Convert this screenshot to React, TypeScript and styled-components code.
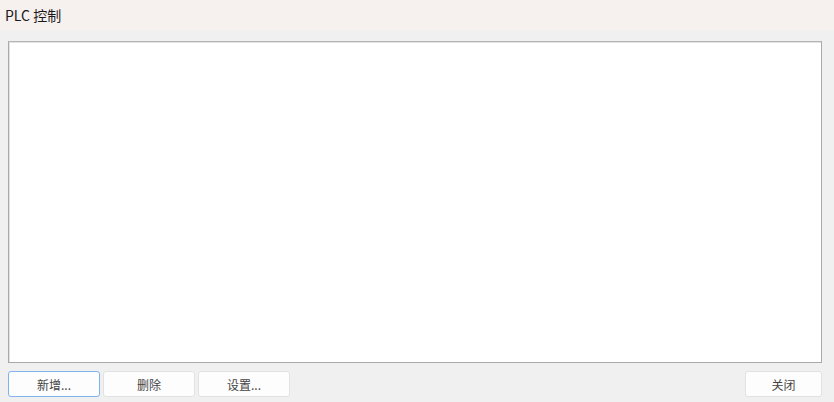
import React from "react";
import styled, { createGlobalStyle } from "styled-components";

const Global = createGlobalStyle`
  html, body { margin: 0; padding: 0; }
  body {
    width: 834px;
    height: 402px;
    overflow: hidden;
    background: #f0f0f0;
    font-family: "Noto Sans CJK SC", "Noto Sans", sans-serif;
  }
`;

const Window = styled.div`
  width: 834px;
  height: 402px;
  display: flex;
  flex-direction: column;
  background: #f0f0f0;
`;

const TitleBar = styled.div`
  height: 31px;
  flex: none;
  display: flex;
  align-items: center;
  padding-left: 5px;
  background: #f6f0ee;
  font-size: 14px;
  color: #1a1a1a;
  box-sizing: border-box;
  padding-bottom: 2px;
`;

const Body = styled.div`
  flex: 1;
  display: flex;
  flex-direction: column;
  padding: 10px 12px 5px 8px;
  gap: 8px;
`;

const ListBox = styled.div`
  height: 322px;
  box-sizing: border-box;
  background: #ffffff;
  border: 1px solid #a9a9a9;
  border-top-color: #b4b4b4;
  box-shadow: inset 1px 1px 0 #e3e3e3;
`;

const ButtonRow = styled.div`
  display: flex;
  align-items: center;
  gap: 3px;
`;

const Spacer = styled.div`
  flex: 1;
`;

const Button = styled.button<{ $w: number; $focused?: boolean }>`
  width: ${(p) => p.$w}px;
  height: 26px;
  box-sizing: border-box;
  background: #fdfdfd;
  border: 1px solid ${(p) => (p.$focused ? "#7eb4ea" : "#e2e2e2")};
  border-radius: 3px;
  font-family: "Noto Sans CJK SC", "Noto Sans", sans-serif;
  font-size: 12px;
  color: #444;
  padding: 0;
  display: flex;
  align-items: center;
  justify-content: center;
`;

export default function App() {
  return (
    <>
      <Global />
      <Window>
        <TitleBar>PLC 控制</TitleBar>
        <Body>
          <ListBox />
          <ButtonRow>
            <Button $w={92} $focused>新增...</Button>
            <Button $w={92}>删除</Button>
            <Button $w={92}>设置...</Button>
            <Spacer />
            <Button $w={77}>关闭</Button>
          </ButtonRow>
        </Body>
      </Window>
    </>
  );
}
